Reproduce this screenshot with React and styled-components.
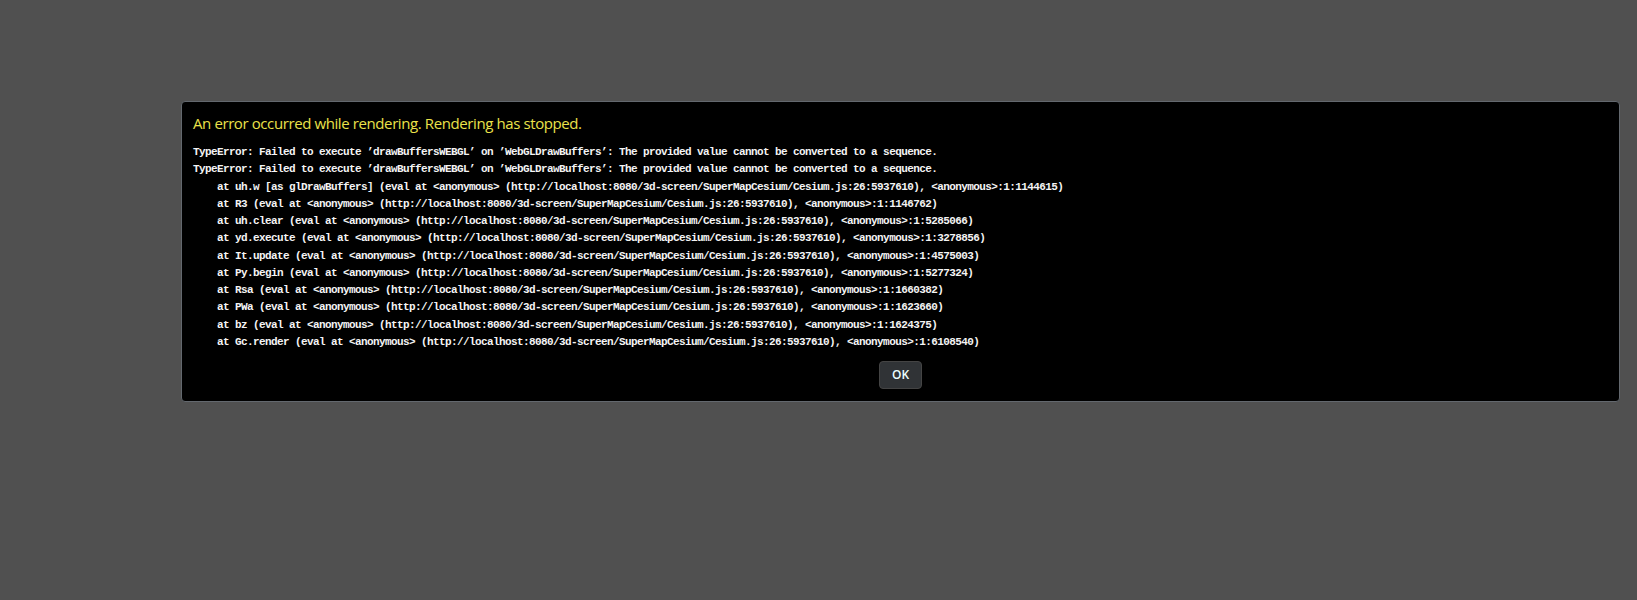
import React from 'react';
import styled, { createGlobalStyle } from 'styled-components';

const SOURCE = '(eval at <anonymous> (http://localhost:8080/3d-screen/SuperMapCesium/Cesium.js:26:5937610), <anonymous>:1:';

const headline =
  'TypeError: Failed to execute ’drawBuffersWEBGL’ on ’WebGLDrawBuffers’: The provided value cannot be converted to a sequence.';

const frames = [
  ['uh.w [as glDrawBuffers]', '1144615'],
  ['R3', '1146762'],
  ['uh.clear', '5285066'],
  ['yd.execute', '3278856'],
  ['It.update', '4575003'],
  ['Py.begin', '5277324'],
  ['Rsa', '1660382'],
  ['PWa', '1623660'],
  ['bz', '1624375'],
  ['Gc.render', '6108540'],
];

const GlobalStyle = createGlobalStyle`
  html, body {
    margin: 0;
    background: #505050;
  }
`;

const Screen = styled.div`
  box-sizing: border-box;
  height: 600px;
  padding: 101px 0 0 181px;
`;

const Panel = styled.div`
  box-sizing: border-box;
  width: 1439px;
  background: #000;
  border: 1px solid #63686e;
  border-radius: 4px;
  padding: 11px 11px 12px;
`;

const Title = styled.div`
  font-family: 'Open Sans', 'Noto Sans', sans-serif;
  font-size: 15px;
  letter-spacing: -0.4px;
  line-height: 20px;
  color: #ebe24a;
`;

const Message = styled.div`
  margin-top: 11px;
  font-family: 'Liberation Mono', 'DejaVu Sans Mono', monospace;
  font-size: 11px;
  font-weight: 700;
  letter-spacing: -0.6px;
  line-height: 17.25px;
  color: #f4f4f4;
  white-space: pre;
`;

const Line = styled.div``;

const Footer = styled.div`
  margin-top: 10px;
  display: flex;
  justify-content: center;
`;

const Button = styled.button`
  box-sizing: border-box;
  height: 28px;
  padding: 5px 12px;
  background: #303336;
  border: 1px solid #444;
  border-radius: 4px;
  color: #edffff;
  font-family: 'Open Sans', 'Noto Sans', sans-serif;
  font-size: 12px;
  font-weight: 600;
  line-height: 16px;
  cursor: pointer;
`;

export default function App() {
  return (
    <>
      <GlobalStyle />
      <Screen>
        <Panel>
          <Title>An error occurred while rendering. Rendering has stopped.</Title>
          <Message>
            <Line>{headline}</Line>
            <Line>{headline}</Line>
            {frames.map(([fn, col]) => (
              <Line key={fn}>{`    at ${fn} ${SOURCE}${col})`}</Line>
            ))}
          </Message>
          <Footer>
            <Button>OK</Button>
          </Footer>
        </Panel>
      </Screen>
    </>
  );
}
